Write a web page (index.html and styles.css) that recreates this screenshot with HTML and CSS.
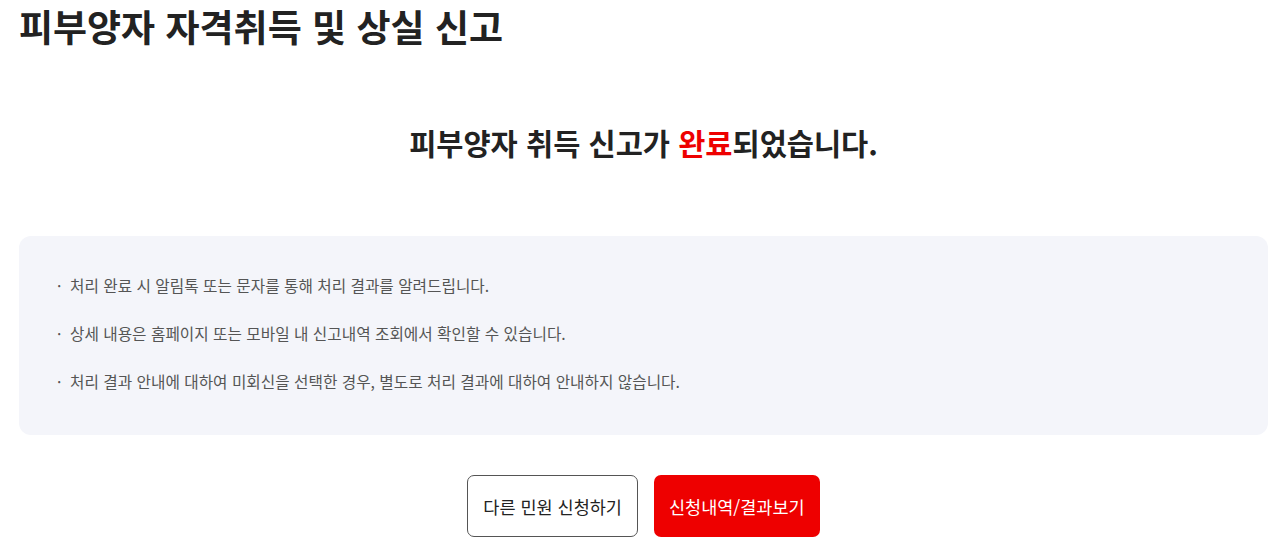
FILE: index.html
```html
<!DOCTYPE html>
<html lang="ko">
<head>
    <meta charset="UTF-8">
    <meta name="viewport" content="width=device-width, initial-scale=1.0">
    <title>피부양자 자격취득 및 상실 신고</title>
    <link rel="stylesheet" href="styles.css">
</head>
<body>
    <h1 class="page-title">피부양자 자격취득 및 상실 신고</h1>

    <div class="container">
        <h2 class="result-title">피부양자 취득 신고가 <span class="highlight">완료</span>되었습니다.</h2>

        <div class="notice-box">
            <ul class="notice-list">
                <li>처리 완료 시 알림톡 또는 문자를 통해 처리 결과를 알려드립니다.</li>
                <li>상세 내용은 홈페이지 또는 모바일 내 신고내역 조회에서 확인할 수 있습니다.</li>
                <li>처리 결과 안내에 대하여 미회신을 선택한 경우, 별도로 처리 결과에 대하여 안내하지 않습니다.</li>
            </ul>
        </div>

        <div class="button-group">
            <button class="btn btn-outline">다른 민원 신청하기</button>
            <button class="btn btn-primary">신청내역/결과보기</button>
        </div>
    </div>
</body>
</html>
```

FILE: styles.css
```css
body {
    margin: 0;
    padding: 0 10px 0 19px;
    font-family: "Noto Sans CJK KR", "Noto Sans", sans-serif;
    color: #222;
    background-color: #fff;
}

.page-title {
    margin: 0;
    padding-top: 2px;
    font-size: 37px;
    font-weight: 700;
    line-height: 48px;
    color: #222;
}

.container {
    padding-top: 72px;
}

.result-title {
    margin: 0 0 74px;
    text-align: center;
    font-size: 29.5px;
    font-weight: 700;
    line-height: 40px;
    color: #222;
}

.highlight {
    color: #ee0000;
}

.notice-box {
    background-color: #f4f5fa;
    border-radius: 12px;
    padding: 38px 38px 41px;
}

.notice-list {
    list-style: none;
    margin: 0;
    padding: 0;
}

.notice-list li {
    position: relative;
    padding-left: 13px;
    font-size: 15.7px;
    line-height: 24px;
    color: #555;
}

.notice-list li + li {
    margin-top: 24px;
}

.notice-list li::before {
    content: "·";
    position: absolute;
    left: 0;
    top: 0;
    color: #555;
}

.button-group {
    display: flex;
    justify-content: center;
    gap: 16px;
    margin-top: 40px;
}

.btn {
    height: 62px;
    padding: 0 15px;
    border-radius: 7px;
    font-family: inherit;
    font-size: 17.5px;
    cursor: pointer;
}

.btn-outline {
    background-color: #fff;
    color: #222;
    border: 1px solid #555;
}

.btn-primary {
    background-color: #ee0000;
    color: #fff;
    border: none;
}
```
